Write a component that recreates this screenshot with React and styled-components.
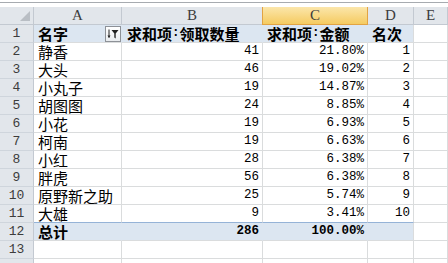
import React from 'react';
import styled, { createGlobalStyle, css } from 'styled-components';

const GlobalStyle = createGlobalStyle`
  html, body { margin: 0; padding: 0; background: #fff; }
  body { width: 448px; height: 263px; overflow: hidden; }
`;

const GRID = '#dadcdd';
const HEAD_BG = '#e2e6eb';
const HEAD_LINE = '#c3c9d1';
const PIVOT = '#dce6f1';
const PIVOT_LINE = '#95b3d7';

const Window = styled.div`
  width: 448px;
  height: 263px;
  overflow: hidden;
  font-family: "Noto Sans CJK SC", sans-serif;
`;

const FormulaEdge = styled.div`
  height: 4px;
  margin-top: 2px;
  border-top: 1px solid #a7abb0;
  background: #fff;
`;

const Sheet = styled.div`
  display: grid;
  grid-template-columns: 34px 88px 141px 105px 46px 1fr;
  grid-auto-rows: 18px;
`;

const Corner = styled.div`
  box-sizing: border-box;
  background: ${HEAD_BG};
  border-right: 1px solid ${HEAD_LINE};
  border-bottom: 1px solid ${HEAD_LINE};
  display: flex;
  align-items: flex-end;
  justify-content: flex-end;
  padding: 0 3px 3px 0;
`;

const CornerMark = styled.span`
  width: 0;
  height: 0;
  border-left: 10px solid transparent;
  border-bottom: 10px solid #b9bec4;
`;

const ColHead = styled.div`
  box-sizing: border-box;
  display: flex;
  align-items: center;
  justify-content: center;
  font-family: "Liberation Serif", serif;
  font-size: 15px;
  color: #3c3c3c;
  background: ${HEAD_BG};
  border-right: 1px solid ${HEAD_LINE};
  border-bottom: 1px solid ${HEAD_LINE};
  ${(p) =>
    p.$active &&
    css`
      background: linear-gradient(#fbe6ab, #f5cb61);
      border-right: 1px solid #e2a343;
      border-left: 1px solid #e2a343;
      border-bottom: 1px solid #e2a343;
      margin-left: -1px;
    `}
`;

const RowHead = styled.div`
  box-sizing: border-box;
  display: flex;
  align-items: flex-end;
  justify-content: center;
  padding-bottom: 1px;
  font-family: "Liberation Mono", monospace;
  font-size: 13px;
  line-height: 15px;
  color: #3c3c3c;
  background: ${HEAD_BG};
  border-right: 1px solid ${HEAD_LINE};
  border-bottom: 1px solid #cfd5dc;
`;

const Cell = styled.div`
  box-sizing: border-box;
  display: flex;
  align-items: flex-end;
  justify-content: ${(p) => (p.$right ? 'flex-end' : 'flex-start')};
  padding: 0 ${(p) => (p.$right ? '3px' : '0')} 0 ${(p) => (p.$right ? '0' : '4px')};
  font-size: 15px;
  line-height: 16px;
  color: #000;
  white-space: nowrap;
  font-weight: ${(p) => (p.$bold ? 700 : 400)};
  background: ${(p) => (p.$fill ? PIVOT : '#fff')};
  border-right: 1px solid ${(p) => (p.$seamless ? PIVOT : GRID)};
  border-bottom: 1px solid ${(p) => p.$under || GRID};
`;

const Num = styled.span`
  font-family: "Liberation Mono", monospace;
  font-size: 12.5px;
  line-height: 15px;
  padding-bottom: 1px;
`;

const FilterButton = styled.span`
  box-sizing: border-box;
  width: 16px;
  height: 16px;
  margin: 0 0 0 auto;
  align-self: center;
  display: flex;
  align-items: center;
  justify-content: center;
  border: 1px solid #8d9197;
  background: linear-gradient(#ffffff, #e9ecef);
`;

function FilterIcon() {
  return (
    <svg width="12" height="12" viewBox="0 0 12 12">
      <path d="M2 1.5v8" stroke="#222" strokeWidth="1" />
      <path d="M0.5 7.5l1.5 2.5l1.5-2.5z" fill="#222" />
      <path d="M4.5 2h7l-2.8 3.5v5l-1.4-1v-4z" fill="#222" />
    </svg>
  );
}

const rows = [
  ['静香', '41', '21.80%', '1'],
  ['大头', '46', '19.02%', '2'],
  ['小丸子', '19', '14.87%', '3'],
  ['胡图图', '24', '8.85%', '4'],
  ['小花', '19', '6.93%', '5'],
  ['柯南', '19', '6.63%', '6'],
  ['小红', '28', '6.38%', '7'],
  ['胖虎', '56', '6.38%', '8'],
  ['原野新之助', '25', '5.74%', '9'],
  ['大雄', '9', '3.41%', '10'],
];

function PivotHeader() {
  return (
    <>
      <RowHead>1</RowHead>
      <Cell $fill $bold $seamless>
        名字
        <FilterButton>
          <FilterIcon />
        </FilterButton>
      </Cell>
      <Cell $fill $bold $seamless>
        <span style={{ paddingLeft: 1 }}>求和项</span>
        <Num>:</Num>
        领取数量
      </Cell>
      <Cell $fill $bold $seamless>
        求和项<Num>:</Num>金额
      </Cell>
      <Cell $fill $bold>
        名次
      </Cell>
      <Cell />
    </>
  );
}

function DataRow({ n, row, last }) {
  const under = last ? PIVOT_LINE : undefined;
  return (
    <>
      <RowHead>{n}</RowHead>
      <Cell $under={under}>{row[0]}</Cell>
      <Cell $right $under={under}>
        <Num>{row[1]}</Num>
      </Cell>
      <Cell $right $under={under}>
        <Num>{row[2]}</Num>
      </Cell>
      <Cell $right $under={under}>
        <Num>{row[3]}</Num>
      </Cell>
      <Cell />
    </>
  );
}

function TotalRow() {
  return (
    <>
      <RowHead>12</RowHead>
      <Cell $fill $bold $seamless>
        总计
      </Cell>
      <Cell $fill $bold $seamless $right>
        <Num>286</Num>
      </Cell>
      <Cell $fill $bold $seamless $right>
        <Num>100.00%</Num>
      </Cell>
      <Cell $fill />
      <Cell />
    </>
  );
}

function EmptyRow({ n }) {
  return (
    <>
      <RowHead>{n}</RowHead>
      <Cell />
      <Cell />
      <Cell />
      <Cell />
      <Cell />
    </>
  );
}

export default function App() {
  return (
    <Window>
      <GlobalStyle />
      <FormulaEdge />
      <Sheet>
        <Corner>
          <CornerMark />
        </Corner>
        <ColHead>A</ColHead>
        <ColHead>B</ColHead>
        <ColHead $active>C</ColHead>
        <ColHead>D</ColHead>
        <ColHead>E</ColHead>
        <PivotHeader />
        {rows.map((r, i) => (
          <DataRow key={i} n={i + 2} row={r} last={i === rows.length - 1} />
        ))}
        <TotalRow />
        <EmptyRow n={13} />
        <EmptyRow n="" />
      </Sheet>
    </Window>
  );
}
